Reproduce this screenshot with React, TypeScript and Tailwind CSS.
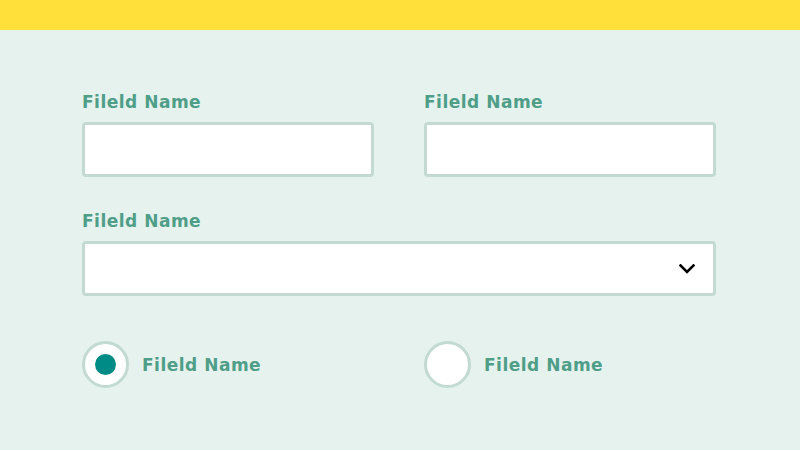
const LABEL = "Fileld Name"

function Field({ label }: { label: string }) {
  return (
    <div className="flex flex-col">
      <label className="text-[17px] leading-[20px] font-semibold tracking-[0.5px] text-[#4e9e88] mb-[10px]">{label}</label>
      <div className="h-[55px] bg-white border-[3px] border-[#c3dad2] rounded-[4px]" />
    </div>
  )
}

function Radio({ checked, label }: { checked?: boolean; label: string }) {
  return (
    <div className="flex items-center gap-[13px]">
      <div className="w-[47px] h-[47px] rounded-full bg-white border-[3px] border-[#c3dad2] flex items-center justify-center">
        {checked && <div className="w-[21px] h-[21px] rounded-full bg-[#008b87]" />}
      </div>
      <span className="text-[17px] leading-[20px] font-semibold tracking-[0.5px] text-[#4e9e88]">{label}</span>
    </div>
  )
}

export default function App() {
  return (
    <div className="w-[800px] h-[450px] bg-[#e6f2ee] overflow-hidden" style={{ fontFamily: '"DejaVu Sans", sans-serif' }}>
      <div className="h-[30px] bg-[#ffdf3a]" />
      <div className="w-[634px] ml-[82px] pt-[62px]">
        <div className="grid grid-cols-2 gap-x-[50px]">
          <Field label={LABEL} />
          <Field label={LABEL} />
        </div>
        <div className="mt-[34px] flex flex-col">
          <label className="text-[17px] leading-[20px] font-semibold tracking-[0.5px] text-[#4e9e88] mb-[10px]">{LABEL}</label>
          <div className="h-[55px] bg-white border-[3px] border-[#c3dad2] rounded-[4px] flex items-center justify-end pr-[18px]">
            <svg width="16" height="10" viewBox="0 0 16 10" fill="none">
              <path d="M1.5 1.5 L8 8 L14.5 1.5" stroke="#000" strokeWidth="2.6" strokeLinecap="square" />
            </svg>
          </div>
        </div>
        <div className="mt-[45px] grid grid-cols-2 gap-x-[50px]">
          <Radio checked label={LABEL} />
          <Radio label={LABEL} />
        </div>
      </div>
    </div>
  )
}
